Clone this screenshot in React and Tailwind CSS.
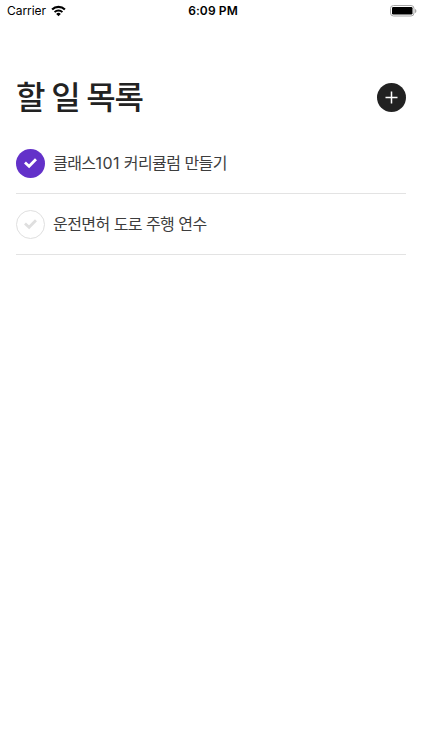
import React, { useState } from 'react';

const WifiIcon = () => (
  <svg width="15" height="12" viewBox="0 0 15 12" className="block">
    <path d="M1.100 4.500a9.100 9.100 0 0 1 12.800 0" fill="none" stroke="#000" strokeWidth="2.200" />
    <path d="M3.600 7.100a5.500 5.500 0 0 1 7.800 0" fill="none" stroke="#000" strokeWidth="2" />
    <path d="M7.500 11.300 5.200 8.900a3.300 3.300 0 0 1 4.600 0z" fill="#000" />
  </svg>
);

const BatteryIcon = () => (
  <svg width="27" height="12" viewBox="0 0 27 12" className="block">
    <rect x="0.5" y="0.5" width="23.5" height="10.5" rx="3" fill="none" stroke="#a6a6a6" />
    <rect x="2" y="2" width="20.5" height="7.5" rx="1.2" fill="#000" />
    <path d="M25 4v4c.9-.3 1.4-1.100 1.4-2s-.5-1.700-1.400-2z" fill="#a6a6a6" />
  </svg>
);

const CheckIcon = () => (
  <svg width="13" height="11" viewBox="0 0 13 11" className="block">
    <path
      d="M2 5.400 5.100 8.300 11 2.300"
      fill="none"
      stroke="currentColor"
      strokeWidth="2.800"
      strokeLinecap="square"
    />
  </svg>
);

const StatusBar = () => (
  <div className="grid grid-cols-3 items-center h-[22px] pl-[7px] pr-[5px] text-black">
    <div className="flex items-center gap-[5px]">
      <span className="text-[12px] tracking-[-0.05px]">Carrier</span>
      <WifiIcon />
    </div>
    <span className="pl-[2px] text-[12px] font-semibold tracking-[0.1px] text-center">6:09 PM</span>
    <div className="flex justify-end">
      <BatteryIcon />
    </div>
  </div>
);

// Digits sit a little looser than the Hangul around them
const TodoText = ({ text }) => (
  <span className="text-[16px] tracking-[-0.55px] text-[#3d3d3d] whitespace-nowrap">
    {text.split(/(\d+)/).map((part, i) =>
      /\d/.test(part) ? <span key={i} className="tracking-[0.4px]">{part}</span> : part
    )}
  </span>
);

const TodoItem = ({ todo, onToggle }) => (
  <li className="flex items-center h-[61px] gap-2 border-b border-[#e3e3e3]">
    <button
      onClick={() => onToggle(todo.id)}
      className={
        todo.done
          ? 'flex items-center justify-center w-[29px] h-[29px] rounded-full bg-[#6331c9] text-white'
          : 'flex items-center justify-center w-[29px] h-[29px] rounded-full border border-[#dfdfdf] text-[#dfdfdf]'
      }
    >
      <CheckIcon />
    </button>
    <TodoText text={todo.text} />
  </li>
);

const App = () => {
  const [todos, setTodos] = useState([
    { id: 1, text: '클래스101 커리큘럼 만들기', done: true },
    { id: 2, text: '운전면허 도로 주행 연수', done: false },
  ]);

  const handleToggle = (id) => {
    setTodos(todos.map((todo) => (todo.id === id ? { ...todo, done: !todo.done } : todo)));
  };

  return (
    <div className="min-h-screen bg-white font-[Inter,'Noto_Sans_CJK_KR',sans-serif]">
      <StatusBar />

      <div className="flex items-center justify-between mt-[51px] px-4 h-12">
        <h1 className="pt-[2px] text-[32px] tracking-[-1.2px] [word-spacing:-0.4px] font-medium text-[#222] leading-none whitespace-nowrap">
          할 일 목록
        </h1>
        <button className="flex items-center justify-center w-[29px] h-[29px] rounded-full bg-[#222]">
          <svg width="13" height="13" viewBox="0 0 13 13" stroke="#fff" strokeWidth="1.5">
            <path d="M6.500 0.500v12M0.500 6.500h12" />
          </svg>
        </button>
      </div>

      <ul className="px-4 mt-3">
        {todos.map((todo) => (
          <TodoItem key={todo.id} todo={todo} onToggle={handleToggle} />
        ))}
      </ul>
    </div>
  );
};

export default App;
